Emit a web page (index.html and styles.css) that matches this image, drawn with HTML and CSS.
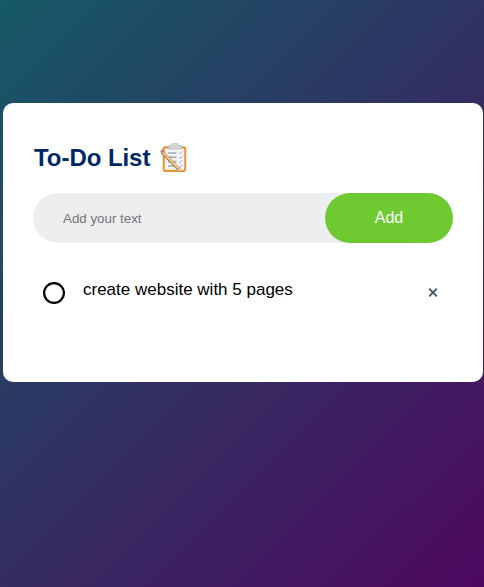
FILE: index.html
```
<!DOCTYPE html>
<html lang="en">
<head>
<meta charset="utf-8">
<title>To-Do List</title>
<link rel="stylesheet" href="styles.css">
</head>
<body>
<main class="todo-app">
  <h2 class="title">To-Do List
    <svg class="title-icon" viewBox="0 0 30 30" aria-hidden="true">
      <rect x="4.200" y="3.800" width="22.600" height="24.700" rx="1.800" fill="#f09a30" stroke="#c97a26" stroke-width=".7"/>
      <path d="M5.800 5.500h19.400v21.300H5.800z" fill="#f3f4fa"/>
      <path d="M9.500 6V3.300q0-1 1-1H13v-1q0-.8.8-.8h4.400q.8 0 .8.8v1h2.500q1 0 1 1V6z" fill="#d3d6d9" stroke="#a9abad" stroke-width=".5"/>
      <path d="M9 10h8.500M9 14.300h8.500M9 18.600h8.500M9 23h8.500" stroke="#a5a6ab" stroke-width="1.600"/>
      <path d="M20 9.500l1.200 1.500 2.300-3M20 14l1.200 1.500 2.300-3M20 18.500l1.200 1.500 2.300-3M20 23l1.200 1.500 2.300-3" fill="none" stroke="#aeb9e2" stroke-width="1"/>
      <path d="M3 9L20 26.300" stroke="#9b7650" stroke-width="3.300"/>
      <path d="M3.200 8.800L20.100 26" stroke="#f5c581" stroke-width="2.100"/>
      <path d="M1 8.500L3.500 6l2 2L3 10.500z" fill="#bd8177"/>
      <path d="M18.800 27.400l2.500-2.500 1.400 3.900z" fill="#e5c4a0"/>
      <path d="M21.500 28.400l.7-.7.500 1.100z" fill="#555"/>
    </svg>
  </h2>
  <div class="row">
    <input class="task-input" type="text" placeholder="Add your text" aria-label="Add your text">
    <button class="add-button">Add</button>
  </div>
  <ul class="tasks">
    <li class="task">
      <svg class="check" viewBox="0 0 24 24" aria-hidden="true"><circle cx="12" cy="12" r="9.900"/></svg>
      <span class="task-text">create website with 5 pages</span>
      <svg class="remove" viewBox="0 0 10 10" role="img"><path d="M1.200 .7l7.600 7.600M8.800 .7L1.200 8.300"/></svg>
    </li>
  </ul>
</main>
</body>
</html>
```

FILE: styles.css
```
* {
  box-sizing: border-box;
  margin: 0;
  padding: 0;
}

body {
  min-height: 100vh;
  padding: 103px 1px 0 3px;
  overflow: hidden;
  font-family: "Liberation Sans", Arial, sans-serif;
  background: linear-gradient(135deg, #155966, #4e085f);
}

.todo-app {
  width: 480px;
  height: 279px;
  padding: 40px 30px 70px;
  border-radius: 10px;
  background: #fff;
}

.title {
  display: flex;
  align-items: center;
  height: 30px;
  margin: 0 0 20px 1px;
  color: #002765;
  font-size: 24px;
  letter-spacing: -0.05px;
}

.title-icon {
  width: 30px;
  height: 30px;
  margin-left: 9px;
}

.row {
  display: flex;
  height: 50px;
  margin-bottom: 25px;
  border-radius: 30px;
  background: #edeef0;
}

.task-input {
  flex: 1;
  min-width: 0;
  padding-left: 30px;
  border: 0;
  outline: 0;
  background: transparent;
  font: 13.333px "Liberation Sans", Arial, sans-serif;
}

.task-input::placeholder {
  color: #757575;
}

.add-button {
  width: 128px;
  border: 0;
  border-radius: 40px;
  background: #6fca31;
  color: #fff;
  font: 16px "Liberation Sans", Arial, sans-serif;
}

.tasks {
  list-style: none;
}

.task {
  display: flex;
  align-items: center;
  height: 50px;
  padding: 0 15px 0 9px;
}

.check {
  width: 24px;
  height: 24px;
  fill: none;
  stroke: #000;
  stroke-width: 2.2;
}

.task-text {
  flex: 1;
  margin: 0 0 6px 17px;
  font-size: 17px;
  line-height: 20px;
}

.remove {
  width: 10px;
  height: 10px;
  fill: none;
  stroke: #465866;
  stroke-width: 1.900;
}
```
